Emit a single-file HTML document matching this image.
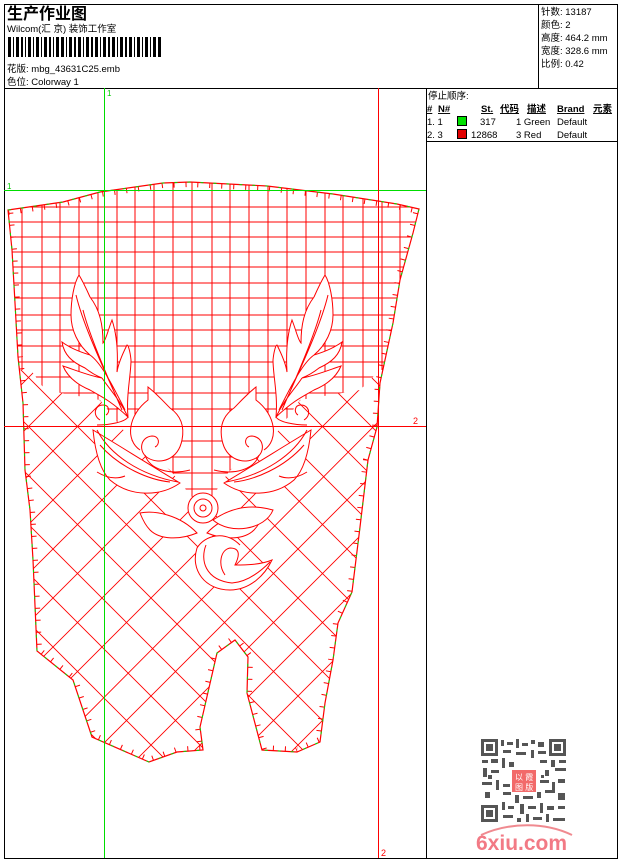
<!DOCTYPE html>
<html><head><meta charset="utf-8"><style>
html,body{margin:0;padding:0;background:#fff;}
body{width:620px;height:860px;overflow:hidden;position:relative;font-family:"Liberation Sans","Noto Sans CJK SC",sans-serif;}
svg{position:absolute;left:0;top:0;}
text{font-family:"Liberation Sans","Noto Sans CJK SC",sans-serif;}
</style></head><body>
<svg width="620" height="860" viewBox="0 0 620 860" xmlns="http://www.w3.org/2000/svg">
<defs>
<clipPath id="out"><path d="M8,210 L63,202 L100,192 L163,183 L190,182 L267,186 L333,194 L397,204 L419,209 L413,233 L400,280 L393,323 L380,383 L377,427 L368,460 L360,527 L352,592 L338,623 L333,660 L325,703 L320,742 L297,752 L262,750 L247,693 L248,657 L235,640 L217,653 L200,727 L203,750 L177,752 L149,762 L92,737 L73,680 L37,651 L33,560 L30,510 L25,470 L23,403 L18,357 L15,303 L12,250 Z"/></clipPath>
<clipPath id="gr"><path d="M0,0 L430,0 L430,370 L380,370 L360,390 L300,400 L268,445 L230,470 L212,497 L192,497 L170,470 L135,445 L100,400 L45,390 L31,370 L0,370 Z"/></clipPath>
</defs>
<g fill="none" stroke="#000" stroke-width="1">
<rect x="4.5" y="4.5" width="613" height="854"/>
<line x1="4" y1="88.5" x2="618" y2="88.5"/>
<line x1="538.5" y1="4" x2="538.5" y2="88"/>
<line x1="426.5" y1="88" x2="426.5" y2="858"/>
<line x1="426" y1="141.5" x2="618" y2="141.5"/>
</g>
<text x="7" y="19" font-size="16" font-weight="bold" fill="#000">生产作业图</text>
<text x="7" y="32" font-size="9.5" fill="#000">Wilcom(汇 京) 装饰工作室</text>
<g fill="#000">
<rect x="8" y="37" width="3" height="20"/><rect x="13" y="37" width="1" height="20"/><rect x="16" y="37" width="3" height="20"/><rect x="21" y="37" width="2" height="20"/><rect x="25" y="37" width="1" height="20"/><rect x="28" y="37" width="3" height="20"/><rect x="33" y="37" width="1" height="20"/><rect x="36" y="37" width="3" height="20"/><rect x="41" y="37" width="1" height="20"/><rect x="44" y="37" width="3" height="20"/><rect x="49" y="37" width="2" height="20"/><rect x="53" y="37" width="1" height="20"/><rect x="56" y="37" width="3" height="20"/><rect x="61" y="37" width="3" height="20"/><rect x="66" y="37" width="1" height="20"/><rect x="69" y="37" width="3" height="20"/><rect x="74" y="37" width="2" height="20"/><rect x="78" y="37" width="3" height="20"/><rect x="83" y="37" width="1" height="20"/><rect x="86" y="37" width="3" height="20"/><rect x="91" y="37" width="2" height="20"/><rect x="95" y="37" width="3" height="20"/><rect x="100" y="37" width="1" height="20"/><rect x="103" y="37" width="3" height="20"/><rect x="108" y="37" width="2" height="20"/><rect x="112" y="37" width="3" height="20"/><rect x="117" y="37" width="1" height="20"/><rect x="120" y="37" width="3" height="20"/><rect x="125" y="37" width="2" height="20"/><rect x="129" y="37" width="3" height="20"/><rect x="134" y="37" width="1" height="20"/><rect x="137" y="37" width="3" height="20"/><rect x="142" y="37" width="1" height="20"/><rect x="145" y="37" width="3" height="20"/><rect x="150" y="37" width="1" height="20"/><rect x="153" y="37" width="3" height="20"/><rect x="158" y="37" width="3" height="20"/>
</g>
<text x="7" y="72" font-size="9.5" fill="#000">花版:  mbg_43631C25.emb</text>
<text x="7" y="85" font-size="9.5" fill="#000">色位:  Colorway 1</text>
<g font-size="9.5" fill="#000">
<text x="541" y="15">针数: 13187</text>
<text x="541" y="28">颜色: 2</text>
<text x="541" y="41">高度: 464.2 mm</text>
<text x="541" y="54">宽度: 328.6 mm</text>
<text x="541" y="67">比例: 0.42</text>
<text x="428" y="99">停止顺序:</text>
<g font-weight="bold" text-decoration="underline"><text x="427" y="112">#</text><text x="438" y="112">N#</text><text x="481" y="112">St.</text><text x="500" y="112">代码</text><text x="527" y="112">描述</text><text x="557" y="112">Brand</text><text x="593" y="112">元素</text></g>
<text x="427" y="125">1.  1</text><text x="480" y="125">317</text><text x="516" y="125">1  Green</text><text x="557" y="125">Default</text>
<text x="427" y="138">2.  3</text><text x="471" y="138">12868</text><text x="516" y="138">3  Red</text><text x="557" y="138">Default</text>
</g>
<rect x="457.5" y="116.5" width="9" height="9" fill="#00e000" stroke="#000"/>
<rect x="457.5" y="129.5" width="9" height="9" fill="#e00000" stroke="#000"/>

<g clip-path="url(#out)">
<g stroke="#f00" stroke-width="0.9" fill="none">
<path d="M-300,0 L500,800 M-251,0 L549,800 M-202,0 L598,800 M-153,0 L647,800 M-104,0 L696,800 M-55,0 L745,800 M-6,0 L794,800 M43,0 L843,800 M92,0 L892,800 M141,0 L941,800 M-349,0 L451,800 M-398,0 L402,800 M-447,0 L353,800 M-496,0 L304,800 M-545,0 L255,800 M-594,0 L206,800 M-643,0 L157,800 M-692,0 L108,800 M-741,0 L59,800
M700,0 L-100,800 M651,0 L-149,800 M602,0 L-198,800 M553,0 L-247,800 M504,0 L-296,800 M455,0 L-345,800 M406,0 L-394,800 M749,0 L-51,800 M798,0 L2,800 M847,0 L47,800 M896,0 L96,800 M945,0 L145,800 M994,0 L194,800 M1043,0 L243,800 M1092,0 L292,800 M1141,0 L341,800 M1190,0 L390,800"/>
</g>
<path d="M0,0 L430,0 L430,370 L380,370 L360,390 L300,400 L268,445 L230,470 L212,497 L192,497 L170,470 L135,445 L100,400 L45,390 L31,370 L0,370 Z" fill="#fff"/>
<g clip-path="url(#gr)" stroke="#f00" stroke-width="1" fill="none">
<path d="M22,150V520M42,150V520M60,150V520M79,150V520M98,150V520M117,150V520M135,150V520M154,150V520M173,150V520M192,150V520M212,150V520M230,150V520M249,150V520M268,150V520M287,150V520M306,150V520M325,150V520M343,150V520M363,150V520M382,150V520M400,150V520
M0,207H430M0,222H430M0,237H430M0,252H430M0,267H430M0,283H430M0,298H430M0,315H430M0,330H430M0,346H430M0,362H430M0,377H430M0,393H430M0,409H430M0,441H430M0,457H430M0,473H430M0,489H430"/>
</g>
<path d="M8,210 L63,202 L100,192 L163,183 L190,182 L267,186 L333,194 L397,204 L419,209 L413,233 L400,280 L393,323 L380,383 L377,427 L368,460 L360,527 L352,592 L338,623 L333,660 L325,703 L320,742 L297,752 L262,750 L247,693 L248,657 L235,640 L217,653 L200,727 L203,750 L177,752 L149,762 L92,737 L73,680 L37,651 L33,560 L30,510 L25,470 L23,403 L18,357 L15,303 L12,250 Z" fill="none" stroke="#f00" stroke-width="10" stroke-dasharray="1 11"/>
</g>
<path d="M8,210 L63,202 L100,192 L163,183 L190,182 L267,186 L333,194 L397,204 L419,209 L413,233 L400,280 L393,323 L380,383 L377,427 L368,460 L360,527 L352,592 L338,623 L333,660 L325,703 L320,742 L297,752 L262,750 L247,693 L248,657 L235,640 L217,653 L200,727 L203,750 L177,752 L149,762 L92,737 L73,680 L37,651 L33,560 L30,510 L25,470 L23,403 L18,357 L15,303 L12,250 Z" fill="none" stroke="#f00" stroke-width="1.2"/>
<path d="M8,210 L63,202 L100,192 L163,183 L190,182 L267,186 L333,194 L397,204 L419,209 L413,233 L400,280 L393,323 L380,383 L377,427 L368,460 L360,527 L352,592 L338,623 L333,660 L325,703 L320,742 L297,752 L262,750 L247,693 L248,657 L235,640 L217,653 L200,727 L203,750 L177,752 L149,762 L92,737 L73,680 L37,651 L33,560 L30,510 L25,470 L23,403 L18,357 L15,303 L12,250 Z" fill="none" stroke="#0d0" stroke-width="1" stroke-dasharray="3 10"/>

<g stroke="#f00" stroke-width="1" fill="#fff">
<g id="half">
<path d="M79,275 C74,283 71,300 71,315 C71,330 78,345 90,355 C80,352 70,348 62,342 C64,355 72,362 85,368 C90,372 97,376 102,378 C90,376 75,370 63,366 C68,378 78,385 90,390 C100,396 110,400 128,417 C126,395 131,375 131,360 C130,350 128,345 127,345 C122,355 118,365 117,372 C118,355 117,335 112,320 C108,330 106,340 103,343 C103,325 100,310 90,297 C86,288 82,280 79,275 Z"/>
<path d="M76,295 C82,320 95,350 120,405 M83,310 C88,330 100,360 122,410 M102,378 C110,390 120,400 128,417 M90,355 C100,362 110,380 125,410" fill="none"/>
<path d="M100,420 C92,415 95,405 103,405 C110,405 110,413 106,415 M97,425 C110,425 125,422 128,417" fill="none"/>
<path d="M140,450 C125,440 128,415 148,400 L148,387 C158,395 165,403 170,408 C180,415 185,425 182,440 C178,460 160,465 148,458 C138,452 140,437 152,436 C160,436 160,445 155,447" />
<path d="M93,430 C110,440 150,465 180,483 C160,497 130,497 110,480 C100,470 95,450 93,430 Z"/>
<path d="M97,430 C110,455 140,475 178,482 M97,472 C110,480 120,478 125,476 M100,445 C120,468 150,480 170,482" fill="none"/>
<path d="M140,513 C155,510 180,515 197,533 C180,540 160,540 150,530 C145,525 142,518 140,513 Z"/>
<path d="M145,455 C150,470 170,475 190,470" fill="none"/>
</g>
<use href="#half" transform="translate(404,0) scale(-1,1)"/>
<circle cx="203" cy="508" r="15"/><circle cx="203" cy="508" r="9"/><circle cx="203" cy="508" r="3"/>
<path d="M273,510 C255,505 235,505 213,520 C230,535 265,530 273,510 Z"/>
<path d="M240,545 C225,530 205,535 197,548 C190,570 205,590 230,590 C250,590 265,575 272,560 C260,565 245,565 235,565 C240,555 240,548 230,548 C220,550 218,565 225,575" />
<path d="M206,545 C200,560 205,580 232,583 C248,582 262,570 270,562" fill="none"/>
</g>

<line x1="104.5" y1="88" x2="104.5" y2="858" stroke="#0d0" stroke-width="1"/>
<line x1="4" y1="190.5" x2="426" y2="190.5" stroke="#0d0" stroke-width="1"/>
<line x1="378.5" y1="88" x2="378.5" y2="858" stroke="#f00" stroke-width="1"/>
<line x1="4" y1="426.5" x2="426" y2="426.5" stroke="#f00" stroke-width="1"/>
<text x="107" y="96" font-size="8" fill="#0c0">1</text>
<text x="7" y="189" font-size="8" fill="#0c0">1</text>
<text x="413" y="424" font-size="9" fill="#f00">2</text>
<text x="381" y="856" font-size="9" fill="#f00">2</text>

<g fill="#555">
<rect x="481" y="739" width="85" height="83" fill="#fff"/>
<rect x="481" y="739" width="17" height="17"/><rect x="484" y="742" width="11" height="11" fill="#fff"/><rect x="486" y="744" width="7" height="7"/>
<rect x="549" y="739" width="17" height="17"/><rect x="552" y="742" width="11" height="11" fill="#fff"/><rect x="554" y="744" width="7" height="7"/>
<rect x="481" y="805" width="17" height="17"/><rect x="484" y="808" width="11" height="11" fill="#fff"/><rect x="486" y="810" width="7" height="7"/>
<path d="M501,740h3v6h-3zM507,742h6v3h-6zM516,739h3v9h-3zM522,743h6v3h-6zM531,740h4v4h-4zM538,742h6v5h-6zM503,750h8v3h-8zM516,752h10v3h-10zM531,750h3v8h-3zM538,751h8v3h-8zM482,760h6v3h-6zM491,759h7v4h-7zM502,758h3v10h-3zM509,762h5v5h-5zM540,760h7v3h-7zM551,760h4v7h-4zM559,760h7v3h-7zM483,768h4v9h-4zM491,770h8v3h-8zM545,770h4v6h-4zM555,768h11v3h-11zM482,782h10v3h-10zM496,780h3v10h-3zM503,784h7v3h-7zM540,780h9v3h-9zM552,782h3v8h-3zM558,779h7v4h-7zM485,792h5v6h-5zM503,792h8v3h-8zM515,795h4v8h-4zM523,796h10v3h-10zM537,792h4v6h-4zM545,790h10v3h-10zM558,793h7v7h-7zM502,802h3v8h-3zM508,806h6v3h-6zM520,804h4v10h-4zM528,806h8v3h-8zM540,803h3v10h-3zM547,806h7v4h-7zM558,806h7v3h-7zM503,815h10v3h-10zM517,818h4v4h-4zM526,814h3v8h-3zM533,817h9v3h-9zM546,814h3v8h-3zM553,818h12v3h-12zM541,775h3v3h-3zM488,775h4v4h-4z"/>
</g>
<rect x="512" y="770" width="24" height="22" fill="#f26a6a"/>
<text x="515" y="780" font-size="8" fill="#fff">以 霞</text><text x="515" y="790" font-size="8" fill="#fff">图 版</text>
<path d="M481,835 C510,822 545,822 572,835" stroke="#f08a90" stroke-width="2" fill="none"/>
<text x="476" y="850" font-size="21" font-weight="bold" fill="#f27a85" font-family="Liberation Sans, sans-serif">6xiu.com</text>
</svg>
</body></html>
